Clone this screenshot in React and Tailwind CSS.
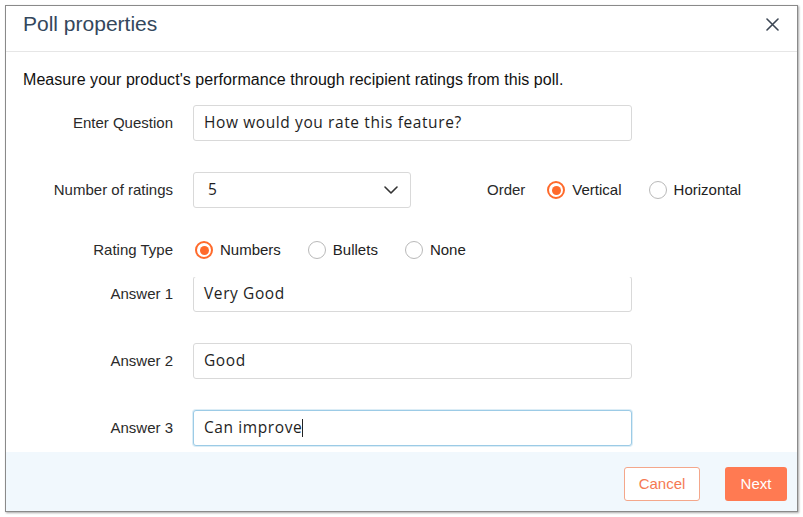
import React from "react";

const sans = { fontFamily: '"Liberation Sans", Arial, sans-serif' };
const fieldFont = { fontFamily: '"Open Sans", "Liberation Sans", sans-serif', letterSpacing: "0.6px" };

function Radio({ checked, label }) {
  return (
    <label className="flex items-center gap-[7px] cursor-pointer">
      {checked ? (
        <span className="flex h-[18px] w-[18px] items-center justify-center rounded-full border-2 border-[#ff6a2b]">
          <span className="h-[9px] w-[9px] rounded-full bg-[#ff6a2b]" />
        </span>
      ) : (
        <span className="h-[18px] w-[18px] rounded-full border-[1.5px] border-[#b9b9b9]" />
      )}
      <span className="text-[15px] text-[#222]">{label}</span>
    </label>
  );
}

function TextField({ value, focused, caret }) {
  return (
    <div
      className={
        "flex h-[36px] w-[439px] items-center rounded-[3px] border bg-white px-[10px] text-[15.5px] text-[#1e1e1e] " +
        (focused
          ? "border-[#9ccbe6] shadow-[0_0_0_1px_rgba(156,203,230,0.35)]"
          : "border-[#d9d9d9]")
      }
      style={fieldFont}
    >
      <span>{value}</span>
      {caret && <span className="h-[18px] w-[1px] bg-[#222]" />}
    </div>
  );
}

function Row({ label, children, className = "" }) {
  return (
    <div className={"flex items-center " + className}>
      <div className="w-[150px] text-right text-[15px] text-[#2a2a2a]">{label}</div>
      <div className="ml-[20px] flex items-center">{children}</div>
    </div>
  );
}

export default function App() {
  return (
    <div className="h-[517px] w-[803px] bg-white pl-[5px] pt-[5px]" style={sans}>
      <div className="flex h-[507px] w-[793px] flex-col border border-[#8a8a8a] bg-white shadow-[1px_1px_2px_rgba(0,0,0,0.35)]">
        {/* header */}
        <div className="h-[46px] border-b border-[#e6e6e6] pb-[10px] pl-[17px] pr-[18px]">
          <div className="flex h-[36px] items-center justify-between">
            <h1 className="text-[21px] font-normal text-[#34475c]">Poll properties</h1>
            <button className="text-[#3c4654]" aria-label="Close">
              <svg width="13" height="13" viewBox="0 0 13 13" fill="none" stroke="currentColor" strokeWidth="1.6" strokeLinecap="round">
                <path d="M1 1L12 12M12 1L1 12" />
              </svg>
            </button>
          </div>
        </div>

        {/* body */}
        <div className="flex flex-1 flex-col overflow-hidden px-[17px] pt-[19px]">
          <p className="h-[18px] text-[16px] leading-[18px] tracking-[0.05px] text-[#111]">
            Measure your product's performance through recipient ratings from this poll.
          </p>

          <Row label="Enter Question" className="mt-[16px]">
            <TextField value="How would you rate this feature?" />
          </Row>

          <div className="mt-[31px] flex items-center">
            <div className="w-[150px] text-right text-[15px] text-[#2a2a2a]">Number of ratings</div>
            <div
              className="ml-[20px] flex h-[36px] w-[218px] items-center justify-between rounded-[3px] border border-[#d9d9d9] bg-white pl-[14px] pr-[12px] text-[15.5px] text-[#1e1e1e]"
              style={fieldFont}
            >
              <span>5</span>
              <svg width="14" height="8" viewBox="0 0 14 8" fill="none" stroke="#333" strokeWidth="1.6" strokeLinecap="round" strokeLinejoin="round">
                <path d="M1 1l6 6 6-6" />
              </svg>
            </div>
            <div className="ml-[76px] text-[15px] text-[#2a2a2a]">Order</div>
            <div className="ml-[22px] flex items-center gap-[27px]">
              <Radio checked label="Vertical" />
              <Radio label="Horizontal" />
            </div>
          </div>

          <Row label="Rating Type" className="mt-[30px] h-[24px]">
            <div className="ml-[2px] flex items-center gap-[27px]">
              <Radio checked label="Numbers" />
              <Radio label="Bullets" />
              <Radio label="None" />
            </div>
          </Row>

          {/* answers list, scrolled slightly */}
          <div className="mt-[15px] flex-1 overflow-hidden">
            <div className="-mt-[1px] flex flex-col gap-[31px]">
              <Row label="Answer 1">
                <TextField value="Very Good" />
              </Row>
              <Row label="Answer 2">
                <TextField value="Good" />
              </Row>
              <Row label="Answer 3">
                <TextField value="Can improve" focused caret />
              </Row>
            </div>
          </div>
        </div>

        {/* footer */}
        <div className="flex h-[59px] items-start justify-end gap-[25px] bg-[#f1f8fd] pr-[10px] pt-[15px]">
          <button className="h-[34px] w-[76px] rounded-[3px] border border-[#f4a78b] bg-white text-[15px] text-[#f57a52]">
            Cancel
          </button>
          <button className="h-[34px] w-[62px] rounded-[3px] bg-[#ff7a52] text-[15px] text-white">
            Next
          </button>
        </div>
      </div>
    </div>
  );
}
